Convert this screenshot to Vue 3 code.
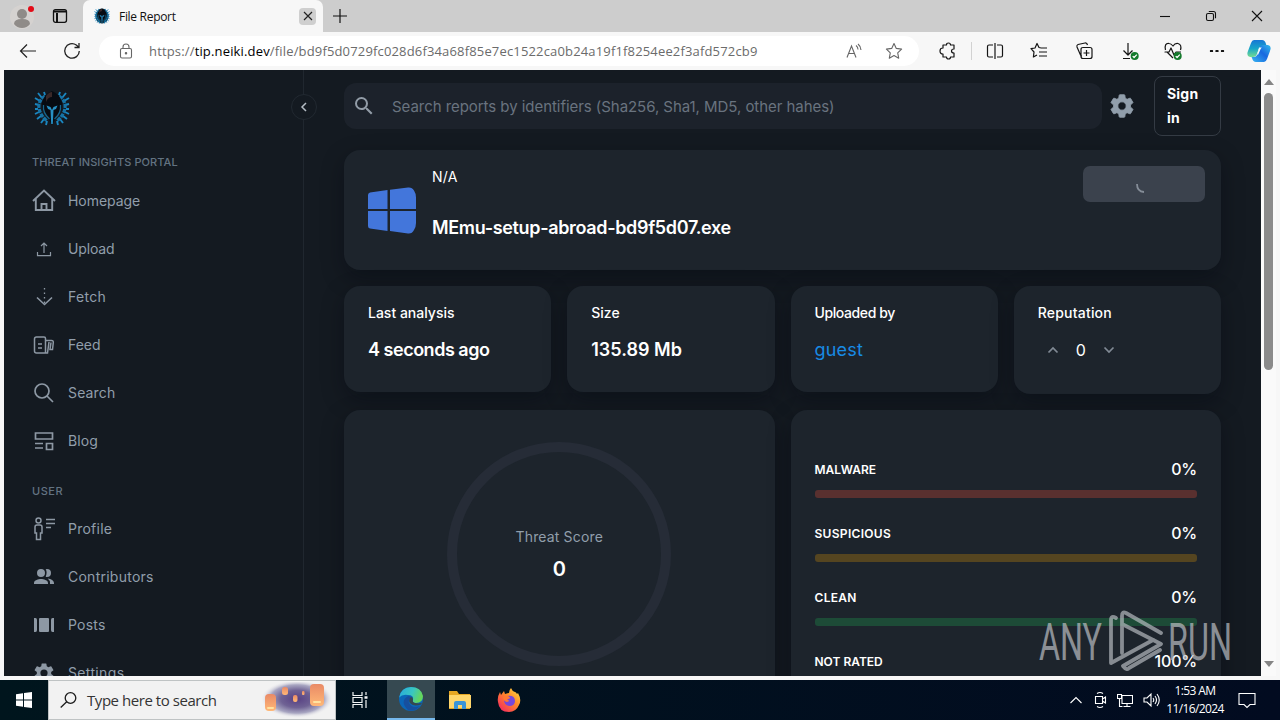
<template>
  <div class="desktop">
    <header class="tabs">
      <div class="tab-tools">
        <svg class="avatar" width="26" height="28" viewBox="0 0 26 28">
          <circle cx="13" cy="16" r="12" fill="#d5d2d0" />
          <circle cx="13" cy="13" r="5" fill="#8f8b88" />
          <path d="M5 23q0-5 8-5t8 5q-3 4-8 4t-8-4z" fill="#8f8b88" />
          <circle cx="22" cy="8" r="3" fill="#e30b17" />
        </svg>
        <svg width="16" height="16" viewBox="0 0 16 16" fill="none" stroke="#111" stroke-width="1.3">
          <rect x="1.5" y="1.7" width="13" height="12.6" rx="2" />
          <path d="M2 3.5h12M5 5v9" stroke-width="2" />
        </svg>
      </div>
      <div class="tab">
        <svg width="16" height="16" viewBox="0 0 36 36"><ellipse cx="18" cy="18" rx="15" ry="17" fill="#123748" /><use href="#neiki" /></svg>
        <span class="tab-title">File Report</span>
        <span class="tab-close">
          <svg width="10" height="10" viewBox="0 0 10 10" stroke="#222" stroke-width="1.2"><path d="M1 1l8 8M9 1l-8 8" /></svg>
        </span>
      </div>
      <svg class="new-tab" width="16" height="16" viewBox="0 0 16 16" stroke="#111" stroke-width="1.2"><path d="M8 1v14M1 8h14" /></svg>
      <div class="window-buttons">
        <svg width="12" height="12" viewBox="0 0 12 12" fill="none" stroke="#111" stroke-width="1.1"><path d="M1 6.500h10" /></svg>
        <svg width="12" height="12" viewBox="0 0 12 12" fill="none" stroke="#111" stroke-width="1.1"><rect x="1.500" y="3.500" width="7" height="7" rx="1.500" /><path d="M3.800 1.500h4.700q2 0 2 2v4.700" /></svg>
        <svg width="12" height="12" viewBox="0 0 12 12" fill="none" stroke="#111" stroke-width="1.1"><path d="M1 1l10 10M11 1L1 11" /></svg>
      </div>
    </header>

    <div class="toolbar">
      <svg class="back" width="18" height="16" viewBox="0 0 18 16" fill="none" stroke="#222" stroke-width="1.2"><path d="M17 8H1.500M8 1.500L1.500 8 8 14.500" /></svg>
      <svg class="reload" width="18" height="18" viewBox="0 0 18 18" fill="none" stroke="#222" stroke-width="1.300"><path d="M16.300 9a7.300 7.300 0 1 1-3-6l2.200 2M16 1v4.500h-4.500" /></svg>
      <div class="address">
        <svg width="14" height="16" viewBox="0 0 14 16" fill="none" stroke="#666" stroke-width="1.100"><rect x="1.500" y="5.500" width="11" height="9.500" rx="1.500" /><path d="M4 5.500V4a3 3 0 0 1 6 0v1.500" /><circle cx="7" cy="10.300" r=".7" fill="#666" /></svg>
        <span class="url">https://<b>tip.neiki.dev</b>/file/bd9f5d0729fc028d6f34a68f85e7ec1522ca0b24a19f1f8254ee2f3afd572cb9</span>
        <svg class="read" width="16" height="16" viewBox="0 0 16 16" fill="none" stroke="#666" stroke-width="1.100"><path d="M1 14.500L5.500 3 10 14.500M2.700 10.500h5.600M10 2.500q2 1.500 2 4M12 1q3 2.500 3 6" /></svg>
        <svg width="18" height="18" viewBox="0 0 18 18" fill="none" stroke="#666" stroke-width="1.100"><path d="M9 1.500l2.300 4.900 5.300.7-3.900 3.700 1 5.400L9 13.600l-4.700 2.600 1-5.400-3.900-3.700 5.300-.7z" stroke-linejoin="round" /></svg>
      </div>
      <svg class="ext" width="18" height="18" viewBox="0 0 18 18" fill="none" stroke="#151515" stroke-width="1.200" stroke-linejoin="round"><path d="M5 3h2.500q0-2 2-2t2 2H15v4q-2.500 0-2.500 2t2.500 2v4h-3.500q0 2-2 2t-2-2H4v-3q-3 0-3-3t3-3V3z" /></svg>
      <i class="divider"></i>
      <svg v-for="b in browserButtons" :key="b.name" :class="b.name" width="18" height="18" viewBox="0 0 18 18" fill="none" stroke="#151515" stroke-width="1.200" stroke-linejoin="round">
        <path :d="b.d" />
        <template v-if="b.ok">
          <circle cx="13.700" cy="14" r="4" fill="#147a2c" stroke="none" />
          <path d="M11.700 14.100l1.400 1.400 2.700-2.800" stroke="#fff" />
        </template>
      </svg>
      <svg class="copilot" width="24" height="24" viewBox="0 0 24 24">
        <defs>
          <linearGradient id="cpa" x1="0" y1="0" x2="0" y2="1"><stop offset="0" stop-color="#1777d5" /><stop offset=".5" stop-color="#18a5c9" /><stop offset="1" stop-color="#75dc91" /></linearGradient>
          <linearGradient id="cpb" x1="0" y1="1" x2="1" y2="0"><stop offset="0" stop-color="#39b5f2" /><stop offset=".55" stop-color="#1868df" /><stop offset="1" stop-color="#33bcec" /></linearGradient>
        </defs>
        <path d="M7 1h8q3 0 4 4l1 3h-5q-3 0-4 4l-1 3q-1 3-4 3H3q-4-1-2-6L4 4q1-3 3-3z" fill="url(#cpa)" />
        <path d="M17 23H9q-3 0-4-4l-.5-1H7q2.500 0 3.500-3l2-6q1-3 3.500-3h5q4 1 2 6l-3 8q-1 3-3 3z" fill="url(#cpb)" />
        <path d="M12 8.500h2.800q-1.300 1-2 3.500l-1.600 3.500H9.500q1-.5 1.500-3z" fill="#f4fbfd" />
      </svg>
    </div>

    <div class="viewport">
      <aside class="sidebar">
        <svg class="logo" width="36" height="36" viewBox="0 0 36 36">
          <g id="neiki">
            <g stroke="#1a86c0" stroke-width="1.900">
              <path d="M8 8L4 3M6 11L1 8M5 15l-4-1M4 19H1M5 22l-4 2M7 26l-4 3M10 29l-3 4M13 31l-1 4M28 8l4-5M30 11l5-3M31 15l4-1M32 19h3M31 22l4 2M29 26l4 3M26 29l3 4M23 31l1 4M11 5l-1-3M25 5l1-3" />
              <path d="M11 6Q4 11 5 18t8 13M25 6q7 5 6 12t-8 13" fill="none" stroke="#1673a6" stroke-width="3.200" stroke-dasharray="4 1" />
            </g>
            <path d="M18 1q-9 4-10 12-1 8 6 15l4 7 4-7q7-7 6-15Q27 5 18 1z" fill="#070b12" />
            <path d="M12 6q3-4 6-4v5q-4 0-6 5z" fill="#3a2828" />
            <path d="M9.500 15q-1 8 6 14M26.500 15q1 8-6 14" stroke="#17638a" fill="none" stroke-width="1.300" />
            <path d="M12.500 15.500l4 1.500 1.500 3 1.500-3 4-1.500-1.500 3.500-2.500 1L18.800 34h-1.600L16.500 20l-2.500-1z" fill="#2790c4" />
          </g>
        </svg>
        <section v-for="group in menu" :key="group.title" :class="['menu', group.cls]">
          <h2>{{ group.title }}</h2>
          <a v-for="item in group.items" :key="item.label">
            <svg width="24" height="24" viewBox="0 0 24 24" fill="none" stroke="#8d98a4" stroke-width="1.600">
              <path :d="item.d" :fill="item.solid ? '#8d98a4' : 'none'" :stroke="item.solid ? 'none' : '#8d98a4'" :stroke-width="item.w" :stroke-dasharray="item.dash" fill-rule="evenodd" />
              <path v-if="item.extra" :d="item.extra" />
            </svg>
            <span :style="{ letterSpacing: item.ls + 'px' }">{{ item.label }}</span>
          </a>
        </section>
        <button class="collapse">
          <svg width="8" height="10" viewBox="0 0 8 10" fill="none" stroke="#b5bdc5" stroke-width="1.500"><path d="M6 1L2 5l4 4" /></svg>
        </button>
      </aside>

      <main>
        <div class="topbar">
          <div class="search">
            <svg width="24" height="24" viewBox="0 0 24 24" fill="#929ca7"><path :d="searchPath" /></svg>
            <span>Search reports by identifiers (Sha256, Sha1, MD5, other hahes)</span>
          </div>
          <svg class="gear" width="28" height="28" viewBox="0 0 24 24" fill="#919eab" stroke="#919eab" stroke-width=".8"><path :d="gearPath" /></svg>
          <button class="signin">Sign<br>in</button>
        </div>

        <section class="card file">
          <svg class="os" width="48" height="48" viewBox="0 0 48 48" fill="#4376db">
            <path d="M0 8q0-2 2-2.500L19.500 3v19H0zM22 2.700L40 0.500q4-.5 6 3 2 3 2 7v11.500H22zM0 24h19.500v20L2 41.500Q0 41 0 39zM22 24h26v12q0 4-2 7-2 4-6 3.500L22 44z" />
          </svg>
          <div class="file-text">
            <span class="tag">N/A</span>
            <h1>MEmu-setup-abroad-bd9f5d07.exe</h1>
          </div>
          <button class="loading">
            <svg width="16" height="16" viewBox="0 0 16 16" fill="none" stroke="#858d98" stroke-width="1.800"><path d="M1 4q0 7.500 7 8" /></svg>
          </button>
        </section>

        <div class="stats">
          <section class="card stat analysis"><h3>Last analysis</h3><strong>4 seconds ago</strong></section>
          <section class="card stat size"><h3>Size</h3><strong>135.89 Mb</strong></section>
          <section class="card stat uploader"><h3>Uploaded by</h3><a>guest</a></section>
          <section class="card stat reputation">
            <h3>Reputation</h3>
            <div class="votes">
              <svg width="12" height="8" viewBox="0 0 12 8" fill="none" stroke="#818a95" stroke-width="1.700"><path d="M1.500 6.500L6 2l4.500 4.500" /></svg>
              <span>0</span>
              <svg width="12" height="8" viewBox="0 0 12 8" fill="none" stroke="#818a95" stroke-width="1.700"><path d="M1.500 1.500L6 6l4.500-4.500" /></svg>
            </div>
          </section>
        </div>

        <div class="panels">
          <section class="card score">
            <div class="ring">
              <span>Threat Score</span>
              <strong>0</strong>
            </div>
          </section>
          <section class="card verdicts">
            <div v-for="v in verdicts" :key="v.label" class="verdict">
              <div class="verdict-row"><span :style="{ letterSpacing: v.ls + 'px' }">{{ v.label }}</span><b>{{ v.value }}%</b></div>
              <div class="bar" :style="{ background: v.color }"></div>
            </div>
          </section>
        </div>
      </main>

      <div class="scrollbar">
        <svg width="10" height="6" viewBox="0 0 10 6"><path d="M0 6l5-6 5 6z" fill="#858585" /></svg>
        <div class="thumb"></div>
        <svg class="scroll-down" width="10" height="6" viewBox="0 0 10 6"><path d="M0 0l5 6 5-6z" fill="#858585" /></svg>
      </div>
    </div>

    <footer class="taskbar">
      <div class="start">
        <svg width="16" height="16" viewBox="0 0 16 16" fill="#fff"><path d="M0 2.300L7 1.300v6.200H0zM8 1.100L16 0v7.500H8zM0 8.500h7v6.200l-7-1zM8 8.500h8V16l-8-1.100z" /></svg>
      </div>
      <div class="find">
        <svg width="18" height="18" viewBox="0 0 18 18" fill="none" stroke="#1c1c1c" stroke-width="1.300"><circle cx="10.500" cy="7" r="5.300" /><path d="M6.700 10.800L.7 16.500" /></svg>
        <span>Type here to search</span>
        <svg class="lanterns" width="74" height="36" viewBox="0 0 74 36">
          <defs>
            <radialGradient id="dusk"><stop offset="0" stop-color="#574083" /><stop offset=".45" stop-color="#6f6294" /><stop offset=".75" stop-color="#a9a7c2" /><stop offset="1" stop-color="#f2f2f2" stop-opacity="0" /></radialGradient>
            <linearGradient id="lamp" x1="0" y1="0" x2="0" y2="1"><stop offset="0" stop-color="#e98a66" /><stop offset="1" stop-color="#ffb877" /></linearGradient>
          </defs>
          <ellipse cx="36" cy="17" rx="36" ry="19" fill="url(#dusk)" />
          <g fill="url(#lamp)">
            <rect x="4" y="12" width="11" height="17" rx="4" /><rect x="21" y="5" width="6" height="8" rx="2.500" />
            <rect x="32" y="13" width="4.500" height="7" rx="2" /><rect x="41" y="9" width="2.500" height="4" rx="1" />
            <rect x="49" y="2" width="14" height="22" rx="4" />
          </g>
          <path d="M7 26h5M53 20h6" stroke="#ffe3a0" stroke-width="2" stroke-linecap="round" />
        </svg>
      </div>
      <div class="task">
        <svg width="18" height="18" viewBox="0 0 18 18" fill="none" stroke="#f2f5f6" stroke-width="1.200"><path d="M2 1v3.500h9V1M2 17v-3.500h9V17M2 6.500h9v5H2zM15 1v3M15 9v8" /><path d="M13.500 6.500h3" stroke-width="2.500" /></svg>
      </div>
      <div class="task active">
        <svg width="24" height="24" viewBox="0 0 24 24">
          <defs><linearGradient id="edge" x1="0" y1="0" x2="1" y2=".3"><stop offset="0" stop-color="#27a9de" /><stop offset=".6" stop-color="#39c6c1" /><stop offset="1" stop-color="#65d65c" /></linearGradient></defs>
          <circle cx="12" cy="12" r="12" fill="#0b66b8" />
          <path d="M.2 10.500Q2 0 12 0t12 9q0 7-7 7-4 0-3-3 1-5-5-5Q3 7 .2 10.500z" fill="url(#edge)" />
          <path d="M9.500 9Q0 14 9 23q7 2 12-4-8 3-11-3-1-3 2-5.500 0-1.500-2.500-1.500z" fill="#174f9e" />
          <path d="M12 10q-3 3-1 6 3 4 11 1.500l1-1.700Q20 17 16 16q-3-1-2-3.500Q14 10 12 10z" fill="#36484e" />
        </svg>
      </div>
      <div class="task">
        <svg width="22" height="20" viewBox="0 0 22 20"><path d="M0 1h8l2 3h11v15H0z" fill="#e6a723" /><path d="M0 5h22v13H0z" fill="#ffd66b" /><path d="M5 19v-6q0-2 2-2h8q2 0 2 2v6h-4v-4H9v4z" fill="#3b94d6" /></svg>
      </div>
      <div class="task">
        <svg width="24" height="24" viewBox="0 0 24 24">
          <defs><linearGradient id="fox" x1="1" y1="0" x2=".1" y2="1"><stop offset="0" stop-color="#ffe447" /><stop offset=".45" stop-color="#ff8a28" /><stop offset="1" stop-color="#f52264" /></linearGradient></defs>
          <path d="M14 0q1 3 4 4 1 0 2 2l1-1q4 7 1 12-3 7-10 7Q2 24 1 14 0 9 3 4l1 3 3-4 1 3q3-1 4-1 0-3 2-5z" fill="url(#fox)" />
          <path d="M10 8q8-1 8 5 0 5-6 5-5-1-5-6 2 3 5 1-2-1-2-2 2 0 3-1-1-2-3-2z" fill="#7648db" />
          <path d="M6 9q3-2 6 0l1 1-3 1 2 2q-3 2-5-1z" fill="#ff7832" />
        </svg>
      </div>
      <div class="tray">
        <svg width="14" height="18" viewBox="0 0 14 18"><path d="M1.500 12L7 6.500l5.500 5.500" /></svg>
        <svg width="14" height="18" viewBox="0 0 14 18"><path d="M4 2.500q3-2 6 0M4 15.500q3 2 6 0M2.500 5.500h7v7h-7zM9.500 8l3-2v6l-3-2" /></svg>
        <svg width="16" height="18" viewBox="0 0 16 18"><path d="M5 4.500h10.500v8H5zM10 12.500v3M6.500 15.500h7M.5 3.500h4v4h-4zM2.500 7.500v8h3" /></svg>
        <svg width="18" height="18" viewBox="0 0 18 18"><path d="M1 7h3l4-4v12l-4-4H1zM10 7q1.500 2 0 4M12 5q3 4 0 8M14 3q4.500 6 0 12" /></svg>
        <div class="clock"><span>1:53 AM</span><span>11/16/2024</span></div>
        <svg class="notice" width="18" height="18" viewBox="0 0 18 18"><path d="M1 2.500h16v11h-5l-3 3-3-3H1z" /></svg>
      </div>
    </footer>

    <svg class="watermark" width="194" height="62" viewBox="0 0 194 62">
      <g fill="#bfc2c7" class="mark-text">
        <text x="1" y="49.500" textLength="63" lengthAdjust="spacingAndGlyphs">ANY</text>
        <text x="130" y="49.500" textLength="64" lengthAdjust="spacingAndGlyphs">RUN</text>
      </g>
      <g fill="none" stroke="#b9bec3" stroke-width="3.800" stroke-linejoin="round" stroke-linecap="round">
        <path d="M78 8q-5-3-5 2v43l42-23" />
        <path d="M84 43V6q0-5 4-3l35 20M84 14l39 20-38 22q4 5 6 2l31-18" />
      </g>
    </svg>
  </div>
</template>

<script setup>
const gearPath = 'M19.140 12.940c.04-.3.060-.61.060-.94s-.02-.64-.07-.94l2.030-1.580a.49.49 0 0 0 .12-.61l-1.920-3.320a.49.49 0 0 0-.59-.22l-2.390.96c-.5-.38-1.030-.7-1.620-.94L14.400 2.810a.48.48 0 0 0-.48-.41h-3.840a.47.47 0 0 0-.47.41L9.250 5.350c-.59.24-1.130.57-1.620.94l-2.390-.96a.48.48 0 0 0-.59.22L2.740 8.870a.47.47 0 0 0 .12.61l2.030 1.580a7 7 0 0 0-.02 1.880l-2.030 1.580a.49.49 0 0 0-.12.61l1.920 3.320c.12.22.37.29.59.22l2.390-.96c.5.38 1.030.7 1.620.94l.36 2.540c.05.24.24.41.48.41h3.840c.24 0 .44-.17.47-.41l.36-2.540c.59-.24 1.130-.56 1.620-.94l2.390.96c.22.08.47 0 .59-.22l1.920-3.320a.47.47 0 0 0-.12-.61zM12 15.600a3.600 3.600 0 1 1 0-7.200 3.600 3.600 0 0 1 0 7.200z'
const searchPath = 'M15.500 14h-.79l-.28-.27A6.470 6.470 0 0 0 16 9.500 6.500 6.500 0 1 0 9.500 16c1.610 0 3.090-.59 4.230-1.570l.27.28v.79l5 4.990L20.490 19zm-6 0a4.500 4.500 0 1 1 0-9 4.500 4.500 0 0 1 0 9z'

const menu = [
  {
    title: 'THREAT INSIGHTS PORTAL',
    cls: 'portal',
    items: [
      { label: 'Homepage', ls: -0.05, d: 'M1 12L12 1.500 23 12M3.800 9.500V21h16.400V9.500M9.500 21v-6h5v6', w: 1.900 },
      { label: 'Upload', ls: -0.15, d: 'M5.500 15v3.700h13V15M12 16V6M9 9l3-3 3 3', w: 1.200 },
      { label: 'Fetch', ls: 0.3, d: 'M12.500 3v16', w: 1.300, dash: '1.500 3', extra: 'M5 12.500l7.500 7 7.500-7' },
      { label: 'Feed', ls: 0, d: 'M5 4h7q1.500 0 1.500 1.500V20H4.500q-2 0-2-2V6q0-2 2-2zM13.500 7.500h6q2 0 1.800 2l-.8 7H18l1-7M17 9l-1.500 11h-2', w: 1.500, extra: 'M6 11h4M6 15h4M6 8h.1' },
      { label: 'Search', ls: 0.15, d: 'M17 10a7 7 0 1 1-14 0 7 7 0 0 1 14 0zM15 15l6 6', w: 1.700 },
      { label: 'Blog', ls: 0.1, d: 'M3.500 4h17v6h-17zM14.500 14.500h6v6h-6zM3 14.500h8M3 19h8', w: 1.700 }
    ]
  },
  {
    title: 'USER',
    cls: 'user',
    items: [
      { label: 'Profile', ls: 0.25, d: 'M9 3.500a2.500 2.500 0 1 1-5 0 2.500 2.500 0 0 1 5 0zM5 8h3q2 0 2 2v6H8.500v6.500h-4V16H3v-6q0-2 2-2zM14 2.500h9M14 6.500h9M14 10.500h5', w: 1.500 },
      { label: 'Contributors', ls: 0.25, solid: true, d: 'M9 4a4 4 0 1 1 0 8 4 4 0 0 1 0-8zM15 12a4 4 0 0 0 0-8q-.7 0-1.300.2Q15.500 7 13.700 11.700q.6.3 1.300.3zM2 19v-1c0-3 4.500-4 7-4s7 1 7 4v1zM17 13.700c2.500.5 5 1.800 5 4.300v1h-4v-1q0-2.600-2.300-4.400z' },
      { label: 'Posts', ls: 0.2, solid: true, d: 'M2 5h1.500Q5 5 5 7v10q0 2-1.500 2H2zM8 5h8q1 0 1 1v12q0 1-1 1H8q-1 0-1-1V6q0-1 1-1zM20.500 5H22v14h-1.500Q19 19 19 17V7q0-2 1.500-2z' },
      { label: 'Settings', ls: 0.35, solid: true, d: gearPath }
    ]
  }
]

const verdicts = [
  { label: 'MALWARE', value: 0, color: '#59302f', ls: 0 },
  { label: 'SUSPICIOUS', value: 0, color: '#554520', ls: 0.3 },
  { label: 'CLEAN', value: 0, color: '#1d4b37', ls: 0.3 },
  { label: 'NOT RATED', value: 100, color: '#5c636b', ls: 0 }
]

const browserButtons = [
  { name: 'split', d: 'M7 3H3q-1.500 0-1.500 1.500v9Q1.500 15 3 15h4M11 3h4q1.500 0 1.500 1.500v9Q16.500 15 15 15h-4M9 1v16' },
  { name: 'fav', d: 'M11 6L9 5.500 7 1.500 5 6l-4 .7L4 10l-.6 5L7 13M11 6h6M9 10h8M9 14h8' },
  { name: 'coll', d: 'M7 14H6.500l-1-1L2 5q-.5-2 1-2.500l7-1.500q2-.3 2.500 2M8 5.500h7q2 0 2 2v7q0 2-2 2H8q-2 0-2-2v-7q0-2 2-2zM11.500 8v6M8.500 11h6' },
  { name: 'downloads', ok: true, d: 'M7 1v12M2.500 8.500L7 13l4.500-4.500M2 16.500h7' },
  { name: 'health', ok: true, d: 'M9 16L3 10H1h4l2-4 3 7 2-3h5M1.500 8Q0 1 5 1.500q2 0 4 2.500 2-3 5-2.500 4 1 2.500 6.500' },
  { name: 'more', d: 'M2.500 8.500h2v1h-2zM8 8.500h2v1H8zM13.500 8.500h2v1h-2z' }
]
</script>

<style>
body {
  margin: 0;
  overflow: hidden;
}
</style>

<style scoped>
* {
  box-sizing: border-box;
}

svg {
  flex: none;
  display: block;
}

h1, h2, h3 {
  margin: 0;
}

.desktop {
  position: relative;
  width: 1280px;
  height: 720px;
  overflow: hidden;
  background: #f7f7f7;
  font-family: "Open Sans", "Noto Sans", sans-serif;
}

.tabs {
  display: flex;
  align-items: center;
  height: 32px;
  background: #cdcdcd;
}

.tab-tools {
  display: flex;
  align-items: center;
  gap: 17px;
  width: 83px;
  padding-left: 9px;
}

.avatar {
  margin-top: -2px;
}

.tab {
  display: flex;
  align-items: center;
  width: 240px;
  height: 32px;
  padding: 0 7px 0 11px;
  background: #f7f7f7;
  border-radius: 7px 7px 0 0;
}

.tab-title {
  flex: 1;
  margin-left: 9px;
  font-size: 12px;
  letter-spacing: -0.3px;
  color: #111;
}

.tab-close {
  display: flex;
  align-items: center;
  justify-content: center;
  width: 17px;
  height: 17px;
  border-radius: 4px;
  background: #cfcfcf;
}

.new-tab {
  margin-left: 9px;
}

.window-buttons {
  display: flex;
  gap: 34px;
  margin-left: auto;
  margin-right: 17px;
}

.toolbar {
  display: flex;
  align-items: center;
  height: 38px;
  padding-left: 19px;
}

.reload {
  margin-left: 26px;
}

.address {
  display: flex;
  align-items: center;
  width: 820px;
  height: 30px;
  margin-left: 18px;
  padding: 0 16px 0 20px;
  border-radius: 15px;
  background: #fff;
}

.url {
  flex: 1;
  margin-left: 16px;
  white-space: nowrap;
  font-size: 13px;
  letter-spacing: 0.16px;
  color: #6b6b6b;
}

.url b {
  font-weight: 400;
  color: #000;
}

.read {
  margin-right: 23px;
}

.ext {
  margin-left: 20px;
}

.divider {
  width: 1px;
  height: 18px;
  margin: 0 14px;
  background: #d2d2d2;
}

.fav, .more {
  margin-left: 26px;
}

.coll {
  margin-left: 27px;
}

.downloads {
  margin-left: 28px;
}

.health {
  margin-left: 25px;
}

.copilot {
  margin-left: 21px;
}

.viewport {
  display: flex;
  width: 1272px;
  height: 606px;
  margin-left: 4px;
  overflow: hidden;
  background: #141a21;
  font-family: Inter, "Liberation Sans", sans-serif;
}

.sidebar {
  position: relative;
  width: 300px;
  flex: none;
  padding: 20px 0 0 28px;
  border-right: 1px solid #20272f;
}

.logo {
  margin-left: 2px;
}

.menu h2 {
  height: 18px;
  line-height: 18px;
  font-size: 11px;
  font-weight: 500;
  letter-spacing: 0.08px;
  color: #637381;
}

.portal {
  margin-top: 27px;
}

.portal h2 {
  margin-bottom: 6px;
}

.user {
  margin-top: 17px;
}

.user h2 {
  margin-bottom: 5px;
  letter-spacing: 0.5px;
}

.menu a {
  display: flex;
  align-items: center;
  gap: 12px;
  height: 48px;
  font-size: 14px;
  color: #919eab;
}

.menu a svg {
  margin-top: -1px;
}

.menu a span {
  padding-bottom: 1px;
}

.collapse {
  position: absolute;
  top: 24px;
  right: -14px;
  display: flex;
  align-items: center;
  justify-content: center;
  width: 26px;
  height: 26px;
  padding: 0;
  border: 1px solid #222931;
  border-radius: 50%;
  background: #141a21;
}

main {
  width: 957px;
  flex: none;
  padding: 6px 40px 0;
}

.topbar {
  display: flex;
  align-items: center;
  height: 60px;
}

.search {
  display: flex;
  align-items: center;
  gap: 16px;
  width: 758px;
  height: 46px;
  padding-left: 8px;
  border-radius: 12px;
  background: #1c222b;
  font-size: 15px;
  letter-spacing: -0.05px;
  color: #69737f;
}

.gear {
  margin-left: 6px;
}

.signin {
  width: 67px;
  height: 60px;
  margin-left: auto;
  padding: 0 12px;
  border: 1px solid #343b44;
  border-radius: 8px;
  background: none;
  color: #fff;
  font: 700 14px/24px Inter, sans-serif;
  letter-spacing: 0.2px;
  text-align: left;
}

.card {
  border-radius: 16px;
  background: #1d242c;
  box-shadow: 0 8px 22px rgba(4, 7, 15, 0.35);
  color: #fff;
}

.file {
  display: flex;
  align-items: center;
  height: 120px;
  margin-top: 14px;
  padding: 0 16px 0 24px;
}

.os {
  margin-top: 1px;
}

.file-text {
  align-self: flex-start;
  flex: 1;
  display: flex;
  flex-direction: column;
  gap: 27px;
  margin-left: 16px;
  padding-top: 16px;
}

.tag {
  font-size: 14px;
  line-height: 22px;
  letter-spacing: 0.2px;
}

.file h1 {
  font-size: 18px;
  line-height: 26px;
  font-weight: 600;
  letter-spacing: -0.34px;
}

.loading {
  align-self: flex-start;
  display: flex;
  align-items: center;
  justify-content: center;
  width: 122px;
  height: 36px;
  margin-top: 16px;
  padding: 7px 0 0;
  border: 0;
  border-radius: 7px;
  background: #3b424d;
}

.stats {
  display: flex;
  align-items: flex-start;
  gap: 16px;
  height: 108px;
  margin-top: 16px;
}

.stat {
  flex: 1;
  height: 106px;
  padding: 16px 24px;
}

.stat h3 {
  line-height: 22px;
  font-size: 14px;
  font-weight: 500;
}

.stat strong, .stat a {
  display: block;
  margin-top: 12px;
  line-height: 28px;
  font-size: 18px;
  font-weight: 600;
}

.analysis strong {
  letter-spacing: -0.48px;
}

.uploader h3 {
  letter-spacing: -0.4px;
}

.stat a {
  font-weight: 400;
  letter-spacing: 0.2px;
  color: #188be5;
}

.reputation {
  height: 108px;
}

.reputation h3 {
  letter-spacing: 0.2px;
}

.votes {
  display: flex;
  align-items: center;
  gap: 17px;
  margin: 14px 0 0 9px;
  line-height: 24px;
  font-size: 16px;
}

.panels {
  display: grid;
  grid-template-columns: 1fr 1fr;
  gap: 16px;
  height: 400px;
  margin-top: 16px;
}

.score {
  display: flex;
  justify-content: center;
  padding-top: 32px;
}

.ring {
  display: flex;
  flex-direction: column;
  align-items: center;
  width: 224px;
  height: 224px;
  padding-top: 74px;
  border: 10px solid #262c37;
  border-radius: 50%;
}

.ring span {
  line-height: 22px;
  font-size: 14px;
  letter-spacing: 0.15px;
  color: #919eab;
}

.ring strong {
  margin-top: 6px;
  font-size: 20px;
  line-height: 30px;
  font-weight: 600;
}

.verdicts {
  padding: 47px 24px 0;
}

.verdict {
  height: 64px;
}

.verdict-row {
  display: flex;
  justify-content: space-between;
  align-items: center;
  height: 24px;
  margin-bottom: 9px;
  font-size: 12px;
  font-weight: 600;
}

.verdict-row b {
  font-size: 16px;
  font-weight: 500;
  letter-spacing: -0.2px;
}

.bar {
  height: 8px;
  border-radius: 3px;
}

.scrollbar {
  display: flex;
  flex-direction: column;
  align-items: center;
  width: 15px;
  padding: 9px 0;
  background: #fafafa;
}

.thumb {
  width: 9px;
  height: 277px;
  margin-top: 8px;
  border-radius: 5px;
  background: #8b8b8b;
}

.scroll-down {
  margin-top: auto;
}

.taskbar {
  display: flex;
  height: 40px;
  margin-top: 4px;
  background: linear-gradient(90deg, #00151d, #020b20);
}

.start {
  display: flex;
  align-items: center;
  justify-content: center;
  width: 48px;
}

.find {
  display: flex;
  align-items: center;
  width: 288px;
  padding-left: 11px;
  border: 1px solid #bfc3c4;
  background: #f2f2f2;
  font-size: 15px;
  letter-spacing: -0.45px;
  color: #343434;
}

.find span {
  flex: 1;
  margin-left: 9px;
}

.task {
  display: flex;
  align-items: center;
  justify-content: center;
  width: 48px;
  margin-right: 1px;
}

.task.active {
  background: #364951;
  border-bottom: 2px solid #76b9ed;
}

.task + .active {
  margin-left: 2px;
}

.tray {
  display: flex;
  align-items: center;
  gap: 10px;
  margin-left: auto;
  padding-right: 24px;
  color: #fff;
}

.tray svg {
  fill: none;
  stroke: #fff;
  stroke-width: 1.1;
}

.clock {
  display: flex;
  flex-direction: column;
  align-items: center;
  width: 60px;
  margin-left: -6px;
  font-size: 12px;
  line-height: 18px;
  letter-spacing: -0.6px;
  white-space: nowrap;
}

.tray .notice {
  margin-left: 3px;
}

.watermark {
  position: absolute;
  left: 1038px;
  top: 610px;
  overflow: visible;
  opacity: 0.68;
}

.mark-text {
  font-family: Roboto, sans-serif;
  font-size: 52px;
  font-weight: 400;
}
</style>
